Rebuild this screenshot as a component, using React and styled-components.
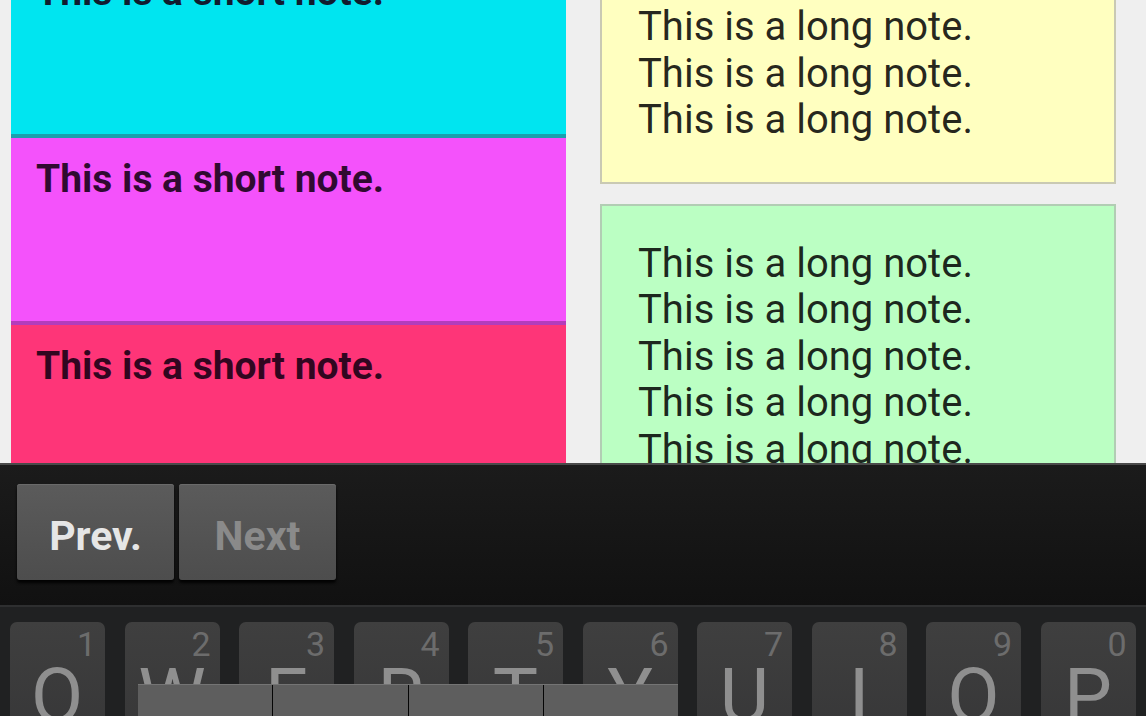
import React from 'react';
import styled, { createGlobalStyle } from 'styled-components';

const GlobalStyle = createGlobalStyle`
  html, body {
    margin: 0;
    padding: 0;
    height: 716px;
    overflow: hidden;
    background: #efefef;
    font-family: Roboto, "Noto Sans", sans-serif;
  }
`;

const Screen = styled.div`
  display: flex;
  flex-direction: column;
  height: 716px;
  width: 1146px;
`;

const NotesArea = styled.div`
  height: 463px;
  flex-shrink: 0;
  overflow: hidden;
  background: #efefef;
`;

const NotesScroll = styled.div`
  display: grid;
  grid-template-columns: 555px 516px;
  column-gap: 34px;
  align-items: start;
  padding-left: 11px;
  margin-top: -49px;
`;

const Column = styled.div`
  display: flex;
  flex-direction: column;
  gap: ${p => p.gap || 0}px;
  padding-top: ${p => p.top || 0}px;
`;

const ShortNote = styled.div`
  height: 187px;
  box-sizing: border-box;
  background: ${p => p.color};
  border-bottom: 4px solid ${p => p.edge};
  padding: 18px 25px 0;
  font-weight: 700;
  font-size: 39px;
  line-height: 46px;
  color: rgba(20, 0, 20, 0.88);
  white-space: nowrap;
`;

const LongNote = styled.div`
  background: ${p => p.color};
  border: 2px solid ${p => p.edge};
  padding: 35px 36px 38px;
  font-size: 40px;
  line-height: 46.5px;
  color: rgba(0, 0, 0, 0.86);
  white-space: nowrap;
`;

const Keyboard = styled.div`
  position: relative;
  flex: 1;
  min-height: 0;
  display: flex;
  flex-direction: column;
  background: #131313;
  border-top: 2px solid #4a4a4a;
  overflow: hidden;
`;

const Toolbar = styled.div`
  height: 142px;
  flex-shrink: 0;
  box-sizing: border-box;
  display: flex;
  gap: 5px;
  padding: 19px 17px 0;
  background: linear-gradient(#1b1b1b, #111111);
  border-bottom: 2px solid #2e2f30;
`;

const NavButton = styled.button`
  width: 157px;
  height: 96px;
  border: none;
  border-radius: 3px;
  background: linear-gradient(#5b5b5b, #4d4d4d);
  box-shadow: 0 1px 0 #6a6a6a inset, 0 3px 3px rgba(0, 0, 0, 0.9);
  font-family: Roboto, sans-serif;
  font-weight: 700;
  font-size: 41px;
  color: ${p => (p.disabled ? '#8a8a8a' : '#e6e6e6')};
  padding: 8px 0 0;
`;

const KeyRow = styled.div`
  flex: 1;
  min-height: 0;
  display: grid;
  grid-template-columns: repeat(10, 95px);
  column-gap: 19.5px;
  align-items: start;
  padding: 15px 0 0 10px;
  background: #202122;
`;

const Key = styled.div`
  position: relative;
  height: 130px;
  border-radius: 7px;
  background: linear-gradient(#3f3f3f, #363637);
  display: flex;
  justify-content: center;
  padding-top: 35px;
  box-sizing: border-box;
`;

const KeyLetter = styled.span`
  font-family: Roboto, sans-serif;
  font-size: 76px;
  line-height: 78px;
  color: #8f8f8f;
`;

const KeyDigit = styled.span`
  position: absolute;
  top: 5px;
  right: 9px;
  font-family: Roboto, sans-serif;
  font-size: 34px;
  line-height: 34px;
  color: #6c6c6c;
`;

const Candidates = styled.div`
  position: absolute;
  left: 138px;
  bottom: 0;
  width: 540px;
  height: 31px;
  display: flex;
  gap: 1px;
  background: #050505;
  border-top: 1px solid #747474;
`;

const CandidateCell = styled.div`
  flex: 1;
  background: #5e5e5e;
`;

const shortNotes = [
  { color: '#00e5f0', edge: '#1a9fae' },
  { color: '#f452fb', edge: '#b43cbc' },
  { color: '#fe3578', edge: '#c42860' },
];

const longNotes = [
  { color: '#ffffc0', edge: '#c9c9b3', lines: 3 },
  { color: '#bbffc3', edge: '#b2cdb4', lines: 8 },
];

const keys = [
  ['Q', '1'], ['W', '2'], ['E', '3'], ['R', '4'], ['T', '5'],
  ['Y', '6'], ['U', '7'], ['I', '8'], ['O', '9'], ['P', '0'],
];

export default function App() {
  return (
    <Screen>
      <GlobalStyle />
      <NotesArea>
        <NotesScroll>
          <Column>
            {shortNotes.map((n, i) => (
              <ShortNote key={i} color={n.color} edge={n.edge}>
                This is a short note.
              </ShortNote>
            ))}
          </Column>
          <Column gap={20} top={16}>
            {longNotes.map((n, i) => (
              <LongNote key={i} color={n.color} edge={n.edge}>
                {Array.from({ length: n.lines }).map((_, j) => (
                  <div key={j}>This is a long note.</div>
                ))}
              </LongNote>
            ))}
          </Column>
        </NotesScroll>
      </NotesArea>
      <Keyboard>
        <Toolbar>
          <NavButton>Prev.</NavButton>
          <NavButton disabled>Next</NavButton>
        </Toolbar>
        <KeyRow>
          {keys.map(([letter, digit]) => (
            <Key key={letter}>
              <KeyDigit>{digit}</KeyDigit>
              <KeyLetter>{letter}</KeyLetter>
            </Key>
          ))}
        </KeyRow>
        <Candidates>
          <CandidateCell />
          <CandidateCell />
          <CandidateCell />
          <CandidateCell />
        </Candidates>
      </Keyboard>
    </Screen>
  );
}
